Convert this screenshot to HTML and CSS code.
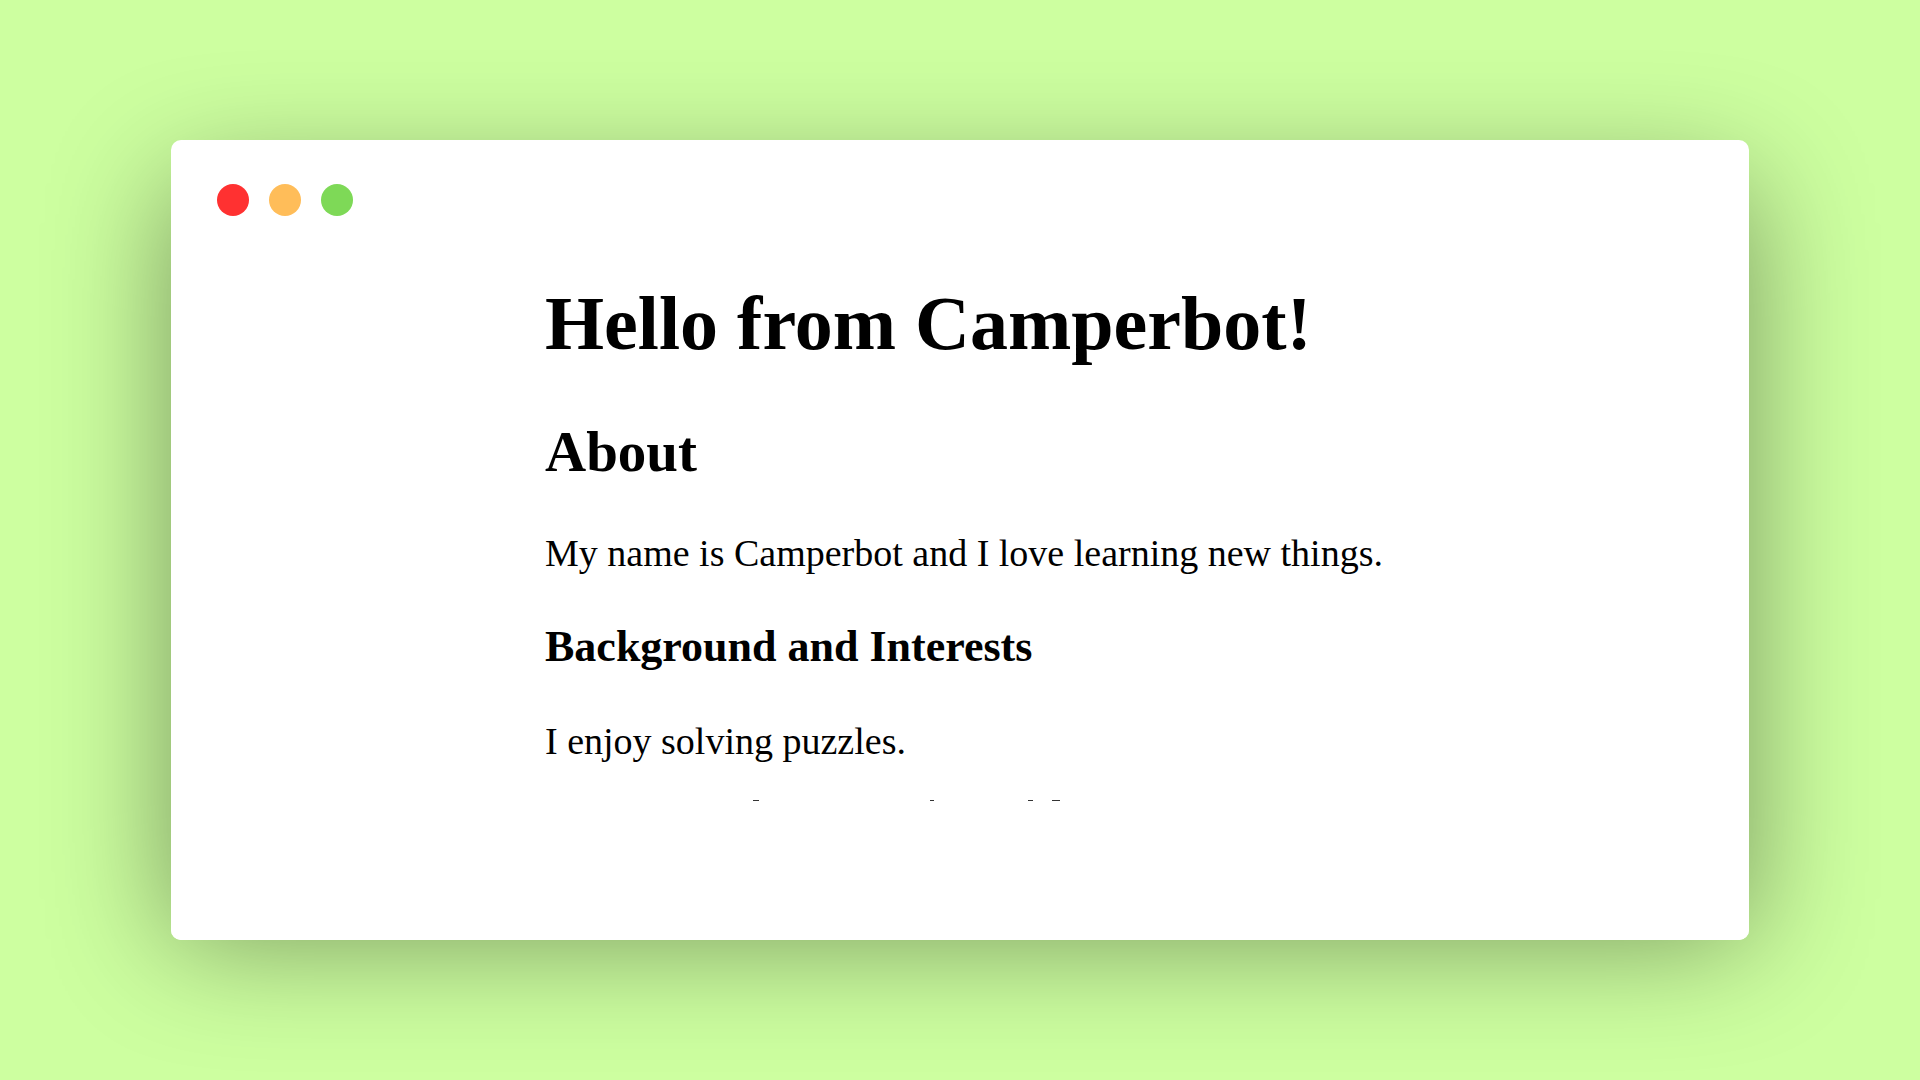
FILE: index.html
```
<!DOCTYPE html>
<html lang="en">
<head>
<meta charset="utf-8">
<meta name="viewport" content="width=device-width, initial-scale=1">
<title>Hello from Camperbot!</title>
<link rel="stylesheet" href="styles.css">
</head>
<body>
<main class="window">
  <div class="dots" aria-hidden="true">
    <span class="dot dot-red"></span>
    <span class="dot dot-amber"></span>
    <span class="dot dot-green"></span>
  </div>
  <article class="profile">
    <h1>Hello from Camperbot!</h1>
    <h2>About</h2>
    <p>My name is Camperbot and I love learning new things.</p>
    <h3>Background and Interests</h3>
    <p>I enjoy solving puzzles.</p>
    <!-- Tips of the next line, cut off by the edge of the view -->
    <svg class="cut-line" width="830" height="2" viewBox="0 0 830 2" aria-hidden="true">
      <path d="M208 .5h6M385 .5h4M483 .5h5M507 .5h8"/>
    </svg>
  </article>
</main>
</body>
</html>
```
FILE: styles.css
```
* {
  box-sizing: border-box;
}

body {
  margin: 0;
  min-height: 100vh;
  display: grid;
  align-items: center;
  padding: 64px 171px;
  background: #cdffa0;
  color: #000;
  font-family: "Liberation Serif", "Times New Roman", serif;
}

.window {
  position: relative;
  z-index: 0;
  padding: 44px 46px 138px;
}

.window::before,
.window::after {
  content: "";
  position: absolute;
  inset: 0;
  z-index: -1;
  border-radius: 10px;
  background: #fff;
}

/* The shadow starts below the top edge, as if lit from above */
.window::before {
  top: 42px;
  box-shadow: 0 0 120px rgba(0, 0, 0, 0.42);
}

.dots {
  display: flex;
  gap: 20px;
}

.dot {
  width: 32px;
  height: 32px;
  border-radius: 50%;
}

.dot-red {
  background: #ff3131;
}

.dot-amber {
  background: #ffbd59;
}

.dot-green {
  background: #7ed957;
}

.profile {
  margin-top: 63px;
  padding-left: max(0px, calc(50% - 415px));
}

.profile h1,
.profile h2,
.profile h3,
.profile p {
  margin: 0 0 46px;
}

.profile h1 {
  margin-bottom: 52px;
  font-size: 76px;
  line-height: 88px;
}

.profile h2 {
  font-size: 57px;
  line-height: 66px;
}

.profile h3 {
  font-size: 44px;
  line-height: 52px;
}

.profile p {
  font-size: 38px;
  line-height: 44px;
}

.profile p:last-of-type {
  margin-bottom: 37px;
}

.cut-line {
  display: block;
  max-width: 100%;
}

.cut-line path {
  stroke: #333;
  stroke-width: 1;
}
```
